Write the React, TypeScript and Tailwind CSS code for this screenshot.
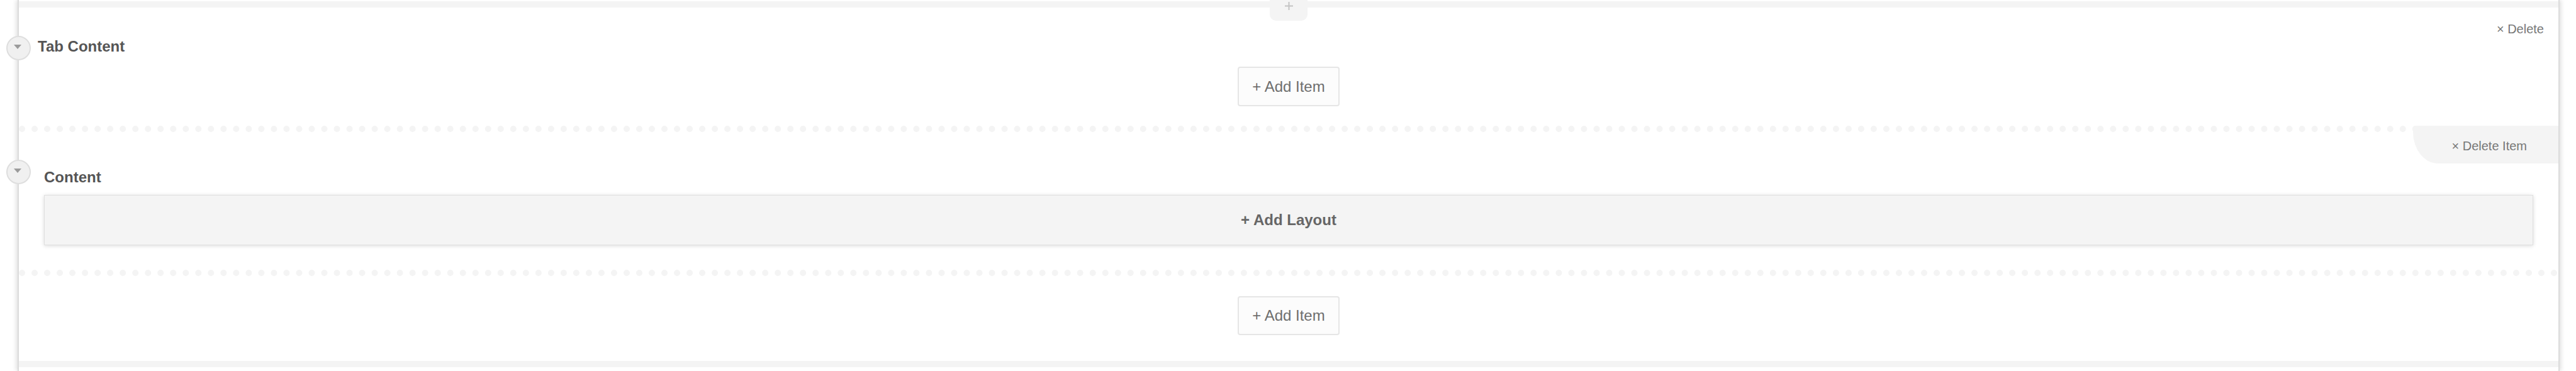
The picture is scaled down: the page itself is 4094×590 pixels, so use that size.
import React from "react";

function Toggle({ top }: { top: string }) {
  return (
    <div
      className={`absolute left-[-20px] ${top} z-10 flex h-[39px] w-[39px] items-center justify-center rounded-full border-2 border-[#dedede] bg-[#f0f0f0]`}
    >
      <svg width="12" height="7" viewBox="0 0 12 7" className="mb-[4px] mr-[3px] shrink-0">
        <polygon points="0,0 12,0 6,7" fill="#9b9b9b" />
      </svg>
    </div>
  );
}

function AddItemButton({ height }: { height: string }) {
  return (
    <div className="flex justify-center">
      <button
        className={`flex ${height} w-[162px] items-center justify-center rounded-[4px] border-2 border-[#e6e6e6] bg-[#fcfcfc] text-[24px] leading-[28px] text-[#6e6e6e]`}
      >
        + Add Item
      </button>
    </div>
  );
}

function Dots() {
  return <div className="h-0 border-t-[10px] border-dotted border-[#f4f4f4]" />;
}

export default function App() {
  return (
    <div className="h-[590px] w-full overflow-hidden bg-white font-['Liberation_Sans',Arial,sans-serif]">
      <div className="ml-[28px] h-full w-[4040px] border-x-2 border-[#dcdcdc] shadow-[-3px_0_6px_rgba(0,0,0,0.10),3px_0_6px_rgba(0,0,0,0.10)]">
        <div className="flex h-full flex-col">
          {/* separator with insert handle */}
          <div className="relative mt-[2px] h-[10px] bg-[#f4f4f4]">
            <button className="absolute left-1/2 top-[-2px] flex h-[33px] w-[60px] -translate-x-1/2 items-start justify-center rounded-b-[10px] bg-[#f4f4f4] pt-[3px]">
              <svg width="13" height="13" viewBox="0 0 13 13">
                <path d="M6.5 0v13M0 6.5h13" stroke="#c4c4c4" strokeWidth="2" />
              </svg>
            </button>
          </div>

          {/* Tab Content group */}
          <div className="relative pb-[31px]">
            <Toggle top="top-[45px]" />
            <div className="flex justify-end pr-[23px] pt-[22px] text-[20px] leading-[24px] text-[#777]">
              × Delete
            </div>
            <div className="mt-[2px] pl-[30px] text-[24px] font-bold leading-[28px] text-[#555]">
              Tab Content
            </div>
            <div className="mt-[18px]">
              <AddItemButton height="h-[63px]" />
            </div>
          </div>

          <Dots />

          {/* Content item */}
          <div className="relative pb-[39px] pt-[58px]">
            <Toggle top="top-[44px]" />
            <div className="absolute right-0 top-[-10px] z-10 flex h-[60px] w-[231px] items-center justify-end rounded-tl-[5px] rounded-bl-[40px_50px] bg-[#f4f4f4] pr-[50px] pt-[4px] text-[20px] leading-[24px] text-[#777]">
              × Delete Item
            </div>
            <div className="pl-[40px] text-[24px] font-bold leading-[28px] text-[#555]">Content</div>
            <div className="mx-[40px] mt-[14px] flex h-[80px] items-center justify-center border border-[#e0e0e0] bg-[#f4f4f4] text-[24px] font-bold leading-[28px] text-[#666] shadow-[0_1px_6px_rgba(0,0,0,0.15)]">
              + Add Layout
            </div>
          </div>

          <Dots />

          <div className="pb-[41px] pt-[32px]">
            <AddItemButton height="h-[62px]" />
          </div>

          <div className="h-[10px] bg-[#f4f4f4]" />
        </div>
      </div>
    </div>
  );
}
